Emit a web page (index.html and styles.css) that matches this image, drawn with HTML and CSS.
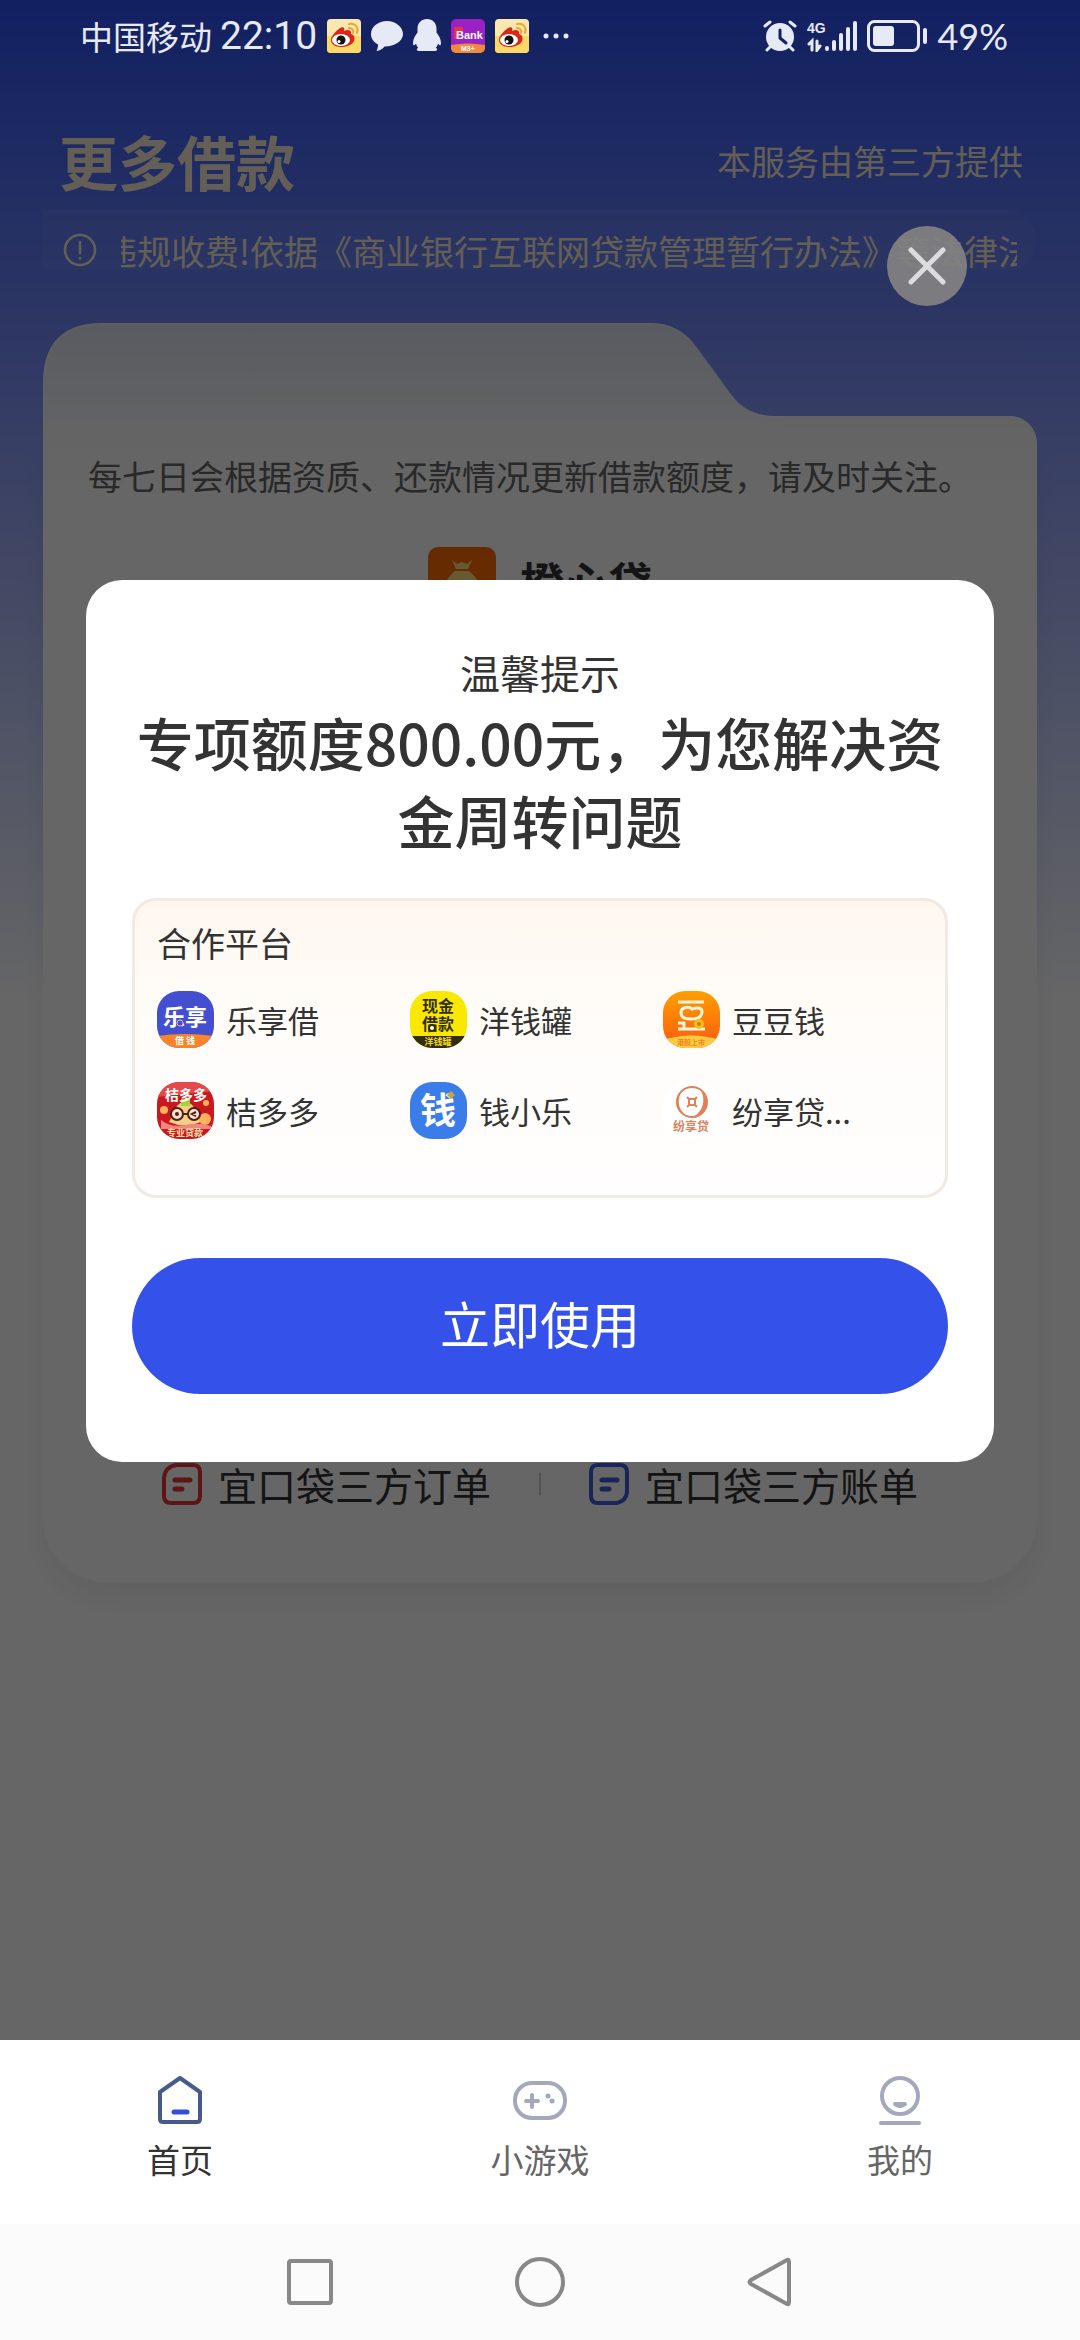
FILE: index.html
```html
<!DOCTYPE html>
<html lang="zh-CN">
<head>
    <meta charset="utf-8">
    <meta name="viewport" content="width=device-width, initial-scale=1">
    <title>更多借款</title>
    <link rel="stylesheet" href="styles.css">
</head>
<body>
    <div class="app">
        <header class="status">
            <div class="status_group">
                <span class="carrier">中国移动</span>
                <span class="clock">22:10</span>
                <svg class="app_ico" viewBox="0 0 34 34"><use href="#weibo"/></svg>
                <svg class="msg_ico" viewBox="0 0 32 32"><path fill="#e6e9f6" d="M16 1C7.500 1 0 6.500 0 14c0 4.500 2.500 8 7 10.500 0 2.500-.5 4.500-1.500 6.500 3.500-.5 6-2.200 8-4.600C24 26.500 32 21 32 14S24.500 1 16 1z"/></svg>
                <svg class="qq_ico" viewBox="0 0 28 34"><path fill="#e6e9f6" d="M14 0c5.500 0 9.500 4 9.500 9.500v4c2.500 3 4.500 7 4.500 10.500 0 3-1.500 3-3 .5-.4 1.800-1.200 3.200-2.200 4.300 2 .9 2 3.200-.8 3.200H6c-2.800 0-2.800-2.300-.8-3.200-1-1.100-1.800-2.500-2.200-4.300-1.500 2.500-3 2.500-3-.5 0-3.500 2-7.500 4.500-10.500v-4C4.500 4 8.500 0 14 0z"/></svg>
                <svg class="app_ico" viewBox="0 0 34 34">
                    <rect width="34" height="34" rx="5" fill="#9a22c4"/>
                    <path d="M0 26Q17 23 34 26v3a5 5 0 0 1-5 5H5a5 5 0 0 1-5-5z" fill="#f08a3c"/>
                    <path d="M3 8h9v4H6v8H3z" fill="#e8304c"/>
                    <text x="5" y="20" class="bank_text">Bank</text>
                    <text x="10" y="32" class="bank_sub">M3+</text>
                </svg>
                <svg class="app_ico" viewBox="0 0 34 34"><use href="#weibo"/></svg>
                <svg class="dots_ico" viewBox="0 0 26 6" fill="#e6e9f6"><circle cx="3" cy="3" r="2.500"/><circle cx="13" cy="3" r="2.500"/><circle cx="23" cy="3" r="2.500"/></svg>
            </div>
            <div class="status_group">
                <svg class="alarm_ico" viewBox="0 0 34 32" fill="none" stroke="#e6e9f6" stroke-linecap="round">
                    <circle cx="17" cy="17" r="14" fill="#e6e9f6" stroke="none"/>
                    <path d="M2 6l5-4M32 6l-5-4M7 27l-3 3M27 27l3 3" stroke-width="3"/>
                    <path d="M17 10v8l6 5" stroke="#14215f" stroke-width="3" stroke-linejoin="round"/>
                </svg>
                <svg class="signal_ico" viewBox="0 0 50 32" fill="none" stroke="#e6e9f6" stroke-width="4" stroke-linecap="round">
                    <text x="0" y="13" class="net_text">4G</text>
                    <path d="M2 24l3-3v9M10 21v9l3-4" stroke-width="3"/>
                    <path d="M20 28v1M27 22v7M34 15v14M41 9v20M48 3v26"/>
                </svg>
                <svg class="battery_ico" viewBox="0 0 60 32" fill="none" stroke="#e6e9f6">
                    <rect x="1.500" y="1.500" width="50" height="29" rx="6" stroke-width="3"/>
                    <rect x="6" y="6" width="21" height="20" rx="3" fill="#e6e9f6" stroke="none"/>
                    <path d="M58 10v12" stroke-width="4" stroke-linecap="round"/>
                </svg>
                <span class="percent">49%</span>
            </div>
        </header>

        <main class="page">
            <div class="title_bar">
                <h1>更多借款</h1>
                <span>本服务由第三方提供</span>
            </div>
            <div class="notice">
                <svg class="notice_ico" viewBox="0 0 34 34" fill="none" stroke="#f7edd8" stroke-width="2.500" stroke-linecap="round"><circle cx="17" cy="17" r="15"/><path d="M17 9v11M17 25v.5"/></svg>
                <div class="marquee"><p>违规收费!依据《商业银行互联网贷款管理暂行办法》等法律法规</p></div>
            </div>

            <section class="folder">
                <div class="folder_head">
                    <svg class="folder_left" viewBox="0 0 740 120">
                        <defs>
                            <linearGradient id="folderFill" x1="0" y1="0" x2="0" y2="1">
                                <stop offset="0" stop-color="#dfe3f2"/>
                                <stop offset="1" stop-color="#fbfbfc"/>
                            </linearGradient>
                        </defs>
                        <path fill="url(#folderFill)" d="M0 120V60Q0 0 60 0H608Q636 0 653 24L688 72Q704 93 732 93H740V120z"/>
                        <path fill="none" stroke="#fff" stroke-opacity=".3" stroke-width="2" d="M1 120V60Q1 1 60 1H608Q636 1 653 24L688 72Q704 94 732 94H740"/>
                    </svg>
                    <div class="folder_right"></div>
                </div>
                <div class="folder_body">
                    <p class="tips">每七日会根据资质、还款情况更新借款额度，请及时关注。</p>
                    <div class="product">
                        <svg class="product_ico" viewBox="0 0 68 68">
                            <rect width="68" height="68" rx="10" fill="#ff6b00"/>
                            <path fill="#ffe27a" d="M24 13l5 4 5-2 5 2 5-4-4 9H28zM27 24h14c10 8 12 16 12 23 0 8-8 10-19 10s-19-2-19-10c0-7 2-15 12-23z"/>
                            <path d="M27 35l7 7 7-7M34 42v12M27 44h14" fill="none" stroke="#ff6b00" stroke-width="3"/>
                        </svg>
                        <h2>橙心贷</h2>
                    </div>
                    <div class="links">
                        <a href="#orders">
                            <svg viewBox="0 0 40 42" fill="none" stroke="#ec3538" stroke-width="4" stroke-linecap="round" stroke-linejoin="round"><path d="M14 2h17q7 0 7 7v24q0 7-7 7H9q-7 0-7-7V15Q3 4 14 2z"/><path d="M13 17h15M13 26h7" stroke-width="5"/></svg>
                            宜口袋三方订单
                        </a>
                        <i></i>
                        <a href="#bills">
                            <svg viewBox="0 0 40 42" fill="none" stroke="#3f5ed8" stroke-width="4" stroke-linecap="round" stroke-linejoin="round"><path d="M9 2h22q7 0 7 7v20Q37 38 28 40H9q-7 0-7-7V9q0-7 7-7z"/><path d="M13 17h15M13 26h7" stroke-width="5"/></svg>
                            宜口袋三方账单
                        </a>
                    </div>
                </div>
            </section>
        </main>

        <footer class="footer">
            <nav class="tabs">
                <a href="#home" class="active">
                    <svg viewBox="0 0 56 56" fill="none" stroke-width="4" stroke-linecap="round" stroke-linejoin="round"><path stroke="#465a8c" d="M28 6L48 20V47q0 3-3 3H11q-3 0-3-3V20z"/><path stroke="#3351d8" stroke-width="5" d="M22 40h13"/></svg>
                    首页
                </a>
                <a href="#games">
                    <svg viewBox="0 0 56 56" fill="none" stroke="#a3a8bd" stroke-width="4" stroke-linecap="round"><rect x="3" y="11" width="50" height="35" rx="17"/><path d="M14 29h12M20 23v12"/><path d="M36 24h.1M40 29h.1" stroke-width="5"/></svg>
                    小游戏
                </a>
                <a href="#mine">
                    <svg viewBox="0 0 56 56" fill="none" stroke="#a3a8bd" stroke-width="4" stroke-linecap="round"><circle cx="28" cy="24" r="18"/><path d="M23 32q5 4 10 0z" stroke-linejoin="round"/><path d="M9 51h38"/></svg>
                    我的
                </a>
            </nav>
            <div class="keys">
                <button type="button" aria-label="最近任务"><svg viewBox="0 0 56 56"><rect x="7" y="7" width="42" height="42" rx="2"/></svg></button>
                <button type="button" aria-label="主屏幕"><svg viewBox="0 0 56 56"><circle cx="28" cy="28" r="23"/></svg></button>
                <button type="button" aria-label="返回"><svg viewBox="0 0 56 56"><path d="M45 6L9 26q-3 2 0 4L45 50q2 1 2-2V8q0-3-2-2z"/></svg></button>
            </div>
        </footer>
    </div>

    <div class="mask">
        <button type="button" class="close" aria-label="关闭"><svg viewBox="0 0 80 80"><path d="M24 24l32 32M56 24L24 56"/></svg></button>
        <div class="dialog" role="dialog">
            <p class="dialog_title">温馨提示</p>
            <h2>专项额度800.00元，为您解决资金周转问题</h2>
            <div class="platform">
                <h3>合作平台</h3>
                <ul>
                    <li>
                        <svg viewBox="0 0 57 57">
                            <defs><clipPath id="round"><rect width="57" height="57" rx="22"/></clipPath></defs>
                            <g clip-path="url(#round)">
                                <rect width="57" height="57" fill="#444fd0"/>
                                <path d="M0 45Q28 41 57 45V57H0z" fill="#fb8428"/>
                                <text x="28" y="34" class="logo_text lt_22" fill="#fff">乐享</text>
                                <circle cx="23" cy="32" r="3" fill="#444fd0" stroke="#d9b6a0"/>
                                <text x="28" y="53" class="logo_text lt_9" fill="#fff">借 钱</text>
                            </g>
                        </svg>
                        <span>乐享借</span>
                    </li>
                    <li>
                        <svg viewBox="0 0 57 57">
                            <g clip-path="url(#round)">
                                <rect width="57" height="57" fill="#fbe800"/>
                                <path d="M0 45H57V57H0z" fill="#332d08"/>
                                <text x="28" y="21" class="logo_text lt_16" fill="#332d08">现金</text>
                                <text x="28" y="39" class="logo_text lt_16" fill="#332d08">借款</text>
                                <circle cx="22" cy="37" r="3" fill="#fff" stroke="#332d08" stroke-width="2"/>
                                <text x="28" y="54" class="logo_text lt_9" fill="#f0dc20">洋钱罐</text>
                            </g>
                        </svg>
                        <span>洋钱罐</span>
                    </li>
                    <li>
                        <svg viewBox="0 0 57 57">
                            <defs><linearGradient id="bean" x1="0" y1="0" x2="0" y2="1"><stop offset="0" stop-color="#ff9f00"/><stop offset="1" stop-color="#f95a12"/></linearGradient></defs>
                            <g clip-path="url(#round)">
                                <rect width="57" height="57" fill="url(#bean)"/>
                                <path d="M0 49Q28 40 57 49V57H0z" fill="#ffcb3e"/>
                                <path d="M15 11h26M15 38h27M15 32h6v6" stroke="#fff5dc" stroke-width="3" fill="none"/>
                                <path d="M21 17q5-2 8 1 10-3 10 3 0 7-11 7-10 0-10-6 0-4 3-5z" stroke="#fff5dc" stroke-width="3" fill="none"/>
                                <circle cx="36" cy="33" r="5" fill="#f4bd1b"/><circle cx="36" cy="33" r="2" fill="#c98400"/>
                                <text x="28" y="54" class="logo_text lt_7" fill="#f08324">港股上市</text>
                            </g>
                        </svg>
                        <span>豆豆钱</span>
                    </li>
                    <li>
                        <svg viewBox="0 0 57 57">
                            <g clip-path="url(#round)">
                                <rect width="57" height="57" fill="#c9181f"/>
                                <path d="M0 0H57V9L0 15z" fill="#e34a4c"/>
                                <path d="M20 24q8-9 16 0l8 16q-16 7-32 0z" fill="#f3cf83"/>
                                <path d="M24 17h9v7h-9z" fill="#a9d03c"/>
                                <circle cx="7" cy="28" r="4" fill="#ffb25b"/><circle cx="48" cy="37" r="6" fill="#ffb25b"/><circle cx="49" cy="21" r="3" fill="#ffb25b"/>
                                <path d="M4 38q10 8 24 5t26 1v3H4z" fill="#f0867d"/>
                                <g fill="#ffdccb" stroke="#4a211b" stroke-width="2"><circle cx="20" cy="32" r="6"/><circle cx="37" cy="32" r="6"/><path d="M26 32h5M39 30l-4 2 4 2" fill="none"/></g>
                                <circle cx="20" cy="32" r="2" fill="#4a211b"/>
                                <text x="29" y="18" class="logo_text lt_14" fill="#fff">桔多多</text>
                                <text x="28" y="54" class="logo_text lt_9" fill="#ffe0a8">专业贷款</text>
                            </g>
                        </svg>
                        <span>桔多多</span>
                    </li>
                    <li>
                        <svg viewBox="0 0 57 57">
                            <rect width="57" height="57" rx="22" fill="#3b7de8"/>
                            <text x="28" y="42" class="logo_text lt_36" fill="#fff">钱</text>
                            <path d="M41 9l4 4-4 4-4-4z" fill="#cba43a"/>
                        </svg>
                        <span>钱小乐</span>
                    </li>
                    <li>
                        <svg viewBox="0 0 57 57">
                            <rect width="57" height="57" rx="22" fill="#fff"/>
                            <circle cx="29" cy="20" r="15" fill="none" stroke="#e0815a" stroke-width="2"/>
                            <path d="M38 9A15 15 0 0 1 28 36 19 19 0 0 0 38 9z" fill="#e0815a"/>
                            <path d="M19 9A14 14 0 0 0 22 33 18 18 0 0 1 19 9z" fill="#e0815a"/>
                            <path d="M26 17h6v6h-6z" fill="none" stroke="#e0815a" stroke-width="2"/>
                            <path d="M26 17l-2-2M32 17l2-2M26 23l-2 2M32 23l2 2" stroke="#e0815a" stroke-width="2"/>
                            <text x="28" y="49" class="logo_text lt_12" fill="#e0815a">纷享贷</text>
                        </svg>
                        <span>纷享贷...</span>
                    </li>
                </ul>
            </div>
            <button type="button" class="submit">立即使用</button>
        </div>
    </div>

    <svg class="sprite">
        <symbol id="weibo" viewBox="0 0 34 34">
            <rect width="34" height="34" rx="4" fill="#fbe8ae"/>
            <path d="M0 17h34v13a4 4 0 0 1-4 4H4a4 4 0 0 1-4-4z" fill="#fbd868"/>
            <path d="M13 9c4-2 5 0 4 3 4-2 8-1 7 3 4 1 4 5 3 7-2 4-8 6-13 6-6 0-10-3-10-7 0-4 5-9 9-12z" fill="#dc2418"/>
            <ellipse cx="14" cy="21" rx="9" ry="6" fill="#fff"/>
            <circle cx="14" cy="21" r="4.500" fill="#111"/><circle cx="12" cy="22.500" r="1.500" fill="#fff"/>
            <path d="M22 5c6-1 10 3 8 9M22 9c3 0 5 2 4 5" fill="none" stroke="#efa52a" stroke-width="2" stroke-linecap="round"/>
        </symbol>
    </svg>
</body>
</html>
```
FILE: styles.css
```css
* {
    box-sizing: border-box;
}

html, body {
    margin: 0;
    padding: 0;
    min-height: 100%;
    font-family: "Noto Sans CJK SC", sans-serif;
    background-color: #fff;
}

h1, h2, h3, p, ul {
    margin: 0;
    padding: 0;
    font-weight: normal;
}

a {
    color: inherit;
    text-decoration: none;
}

button {
    font-family: inherit;
    border: none;
    padding: 0;
    cursor: pointer;
}

svg {
    display: block;
    flex: none;
}

.sprite {
    position: absolute;
    width: 0;
    height: 0;
}

.app {
    display: flex;
    flex-direction: column;
    min-height: 100vh;
    background: linear-gradient(#2d50f5, #fff 1000px);
}

/* 状态栏 */
.status {
    display: flex;
    justify-content: space-between;
    height: 72px;
    padding: 0 72px 0 80px;
    color: #e6e9f6;
    position: relative;
    z-index: 2;
}

.status_group {
    display: flex;
    align-items: center;
    gap: 10px;
}

.carrier {
    font-size: 33px;
    margin-right: -2px;
}

.clock {
    font-family: Roboto, sans-serif;
    font-size: 39px;
}

.percent {
    font-family: Lato, sans-serif;
    font-size: 36px;
}

.app_ico {
    width: 34px;
    height: 34px;
}

.msg_ico {
    width: 32px;
    height: 32px;
}

.qq_ico {
    width: 28px;
    height: 34px;
}

.dots_ico {
    width: 26px;
    height: 6px;
    margin-left: 4px;
}

.alarm_ico {
    width: 34px;
    height: 32px;
}

.signal_ico {
    width: 50px;
    height: 32px;
}

.battery_ico {
    width: 60px;
    height: 32px;
}

.bank_text {
    font: bold 11px "Liberation Sans", sans-serif;
    fill: #fff;
}

.bank_sub {
    font: bold 7px "Liberation Sans", sans-serif;
    fill: #fff;
}

.net_text {
    font: bold 14px "Liberation Sans", sans-serif;
    fill: #e6e9f6;
    stroke: none;
}

/* 页面 */
.page {
    flex: 1;
    padding: 0 43px;
}

.title_bar {
    display: flex;
    justify-content: space-between;
    align-items: center;
    height: 138px;
    padding: 50px 14px 12px 16px;
    color: #f7edd8;
    font-size: 34px;
}

    .title_bar h1 {
        font-size: 59px;
        font-weight: bold;
    }

.notice {
    display: flex;
    align-items: center;
    gap: 24px;
    height: 60px;
    padding: 20px 20px 0;
    margin-bottom: 53px;
    border-radius: 0 30px 30px 0;
    background: rgba(255, 255, 255, .05);
    color: #f7edd8;
}

.notice_ico {
    width: 34px;
    height: 34px;
}

.marquee {
    flex: 1;
    overflow: hidden;
    font-size: 34px;
    white-space: nowrap;
}

    .marquee p {
        text-indent: -18px;
    }

.folder_head {
    display: flex;
    align-items: flex-end;
    height: 120px;
}

.folder_left {
    width: 740px;
    height: 120px;
}

.folder_right {
    flex: 1;
    height: 27px;
    border-radius: 0 27px 0 0;
    background: linear-gradient(#f5f6fa, #fbfbfc);
}

.folder_body {
    height: 1139px;
    border-radius: 0 0 64px 64px;
    background: linear-gradient(#fbfbfc, #fff 60px);
    box-shadow: 0 16px 28px rgba(0, 0, 0, .06);
}

.tips {
    padding: 8px 45px 0;
    color: #666;
    font-size: 34px;
    line-height: 50px;
}

.product {
    display: flex;
    justify-content: center;
    align-items: center;
    gap: 24px;
    margin-top: 46px;
}

    .product h2 {
        font-size: 44px;
        line-height: 68px;
        font-weight: bold;
        color: #333;
    }

.product_ico {
    width: 68px;
    height: 68px;
}

.links {
    display: flex;
    justify-content: center;
    align-items: center;
    gap: 48px;
    margin-top: 839px;
    font-size: 39px;
    line-height: 60px;
    color: #333;
}

    .links a {
        display: flex;
        align-items: center;
        gap: 16px;
    }

    .links svg {
        width: 40px;
        height: 42px;
    }

    .links i {
        width: 2px;
        height: 22px;
        background-color: #ccc;
    }

/* 底部 */
.footer {
    position: relative;
    z-index: 2;
}

.tabs {
    display: flex;
    height: 184px;
    padding-top: 32px;
    background-color: #fff;
}

    .tabs a {
        flex: 1;
        display: flex;
        flex-direction: column;
        align-items: center;
        gap: 6px;
        font-size: 33px;
        line-height: 50px;
        color: #666;
    }

    .tabs .active {
        color: #333;
    }

    .tabs svg {
        width: 56px;
        height: 56px;
    }

.keys {
    display: flex;
    justify-content: center;
    align-items: center;
    gap: 174px;
    height: 116px;
    background-color: #fbfbfb;
}

    .keys button {
        background: none;
    }

    .keys svg {
        width: 56px;
        height: 56px;
        fill: none;
        stroke: #888;
        stroke-width: 4px;
    }

/* 弹窗 */
.mask {
    position: absolute;
    top: 0;
    left: 0;
    z-index: 1;
    width: 100%;
    height: 100%;
    padding: 580px 86px 0;
    background-color: rgba(0, 0, 0, .6);
}

.close {
    position: absolute;
    top: 226px;
    right: 113px;
    width: 80px;
    height: 80px;
    border-radius: 50%;
    background-color: rgba(130, 130, 130, .93);
}

    .close svg {
        fill: none;
        stroke: #dcdcde;
        stroke-width: 5px;
        stroke-linecap: round;
    }

.dialog {
    padding: 62px 46px 68px;
    border-radius: 36px;
    background-color: #fff;
    color: #333;
    text-align: center;
}

.dialog_title {
    font-size: 40px;
    line-height: 60px;
}

.dialog h2 {
    font-size: 57px;
    line-height: 78px;
    font-weight: 500;
}

.platform {
    height: 300px;
    margin: 40px 0 60px;
    padding: 18px 29px 0 22px;
    border: 3px solid #f2e9e4;
    border-radius: 24px;
    background: linear-gradient(#fff7ef, #fffbf7 30%, #fffdfb 60%, #fffefe);
    text-align: left;
}

    .platform h3 {
        font-size: 34px;
        line-height: 48px;
    }

    .platform ul {
        display: grid;
        grid-template-columns: repeat(3, 1fr);
        row-gap: 34px;
        margin-top: 24px;
    }

    .platform li {
        display: flex;
        align-items: center;
        gap: 12px;
        font-size: 31px;
        line-height: 54px;
        white-space: nowrap;
    }

    .platform li svg {
        width: 57px;
        height: 57px;
    }

.logo_text {
    font-weight: bold;
    text-anchor: middle;
}

.lt_7 { font-size: 7px; }
.lt_9 { font-size: 9px; }
.lt_12 { font-size: 12px; }
.lt_14 { font-size: 14px; }
.lt_16 { font-size: 16px; }
.lt_22 { font-size: 22px; }
.lt_36 { font-size: 36px; }

.submit {
    width: 100%;
    height: 136px;
    padding-bottom: 8px;
    border-radius: 68px;
    background-color: #3452ea;
    color: #fff;
    font-size: 50px;
}
```
